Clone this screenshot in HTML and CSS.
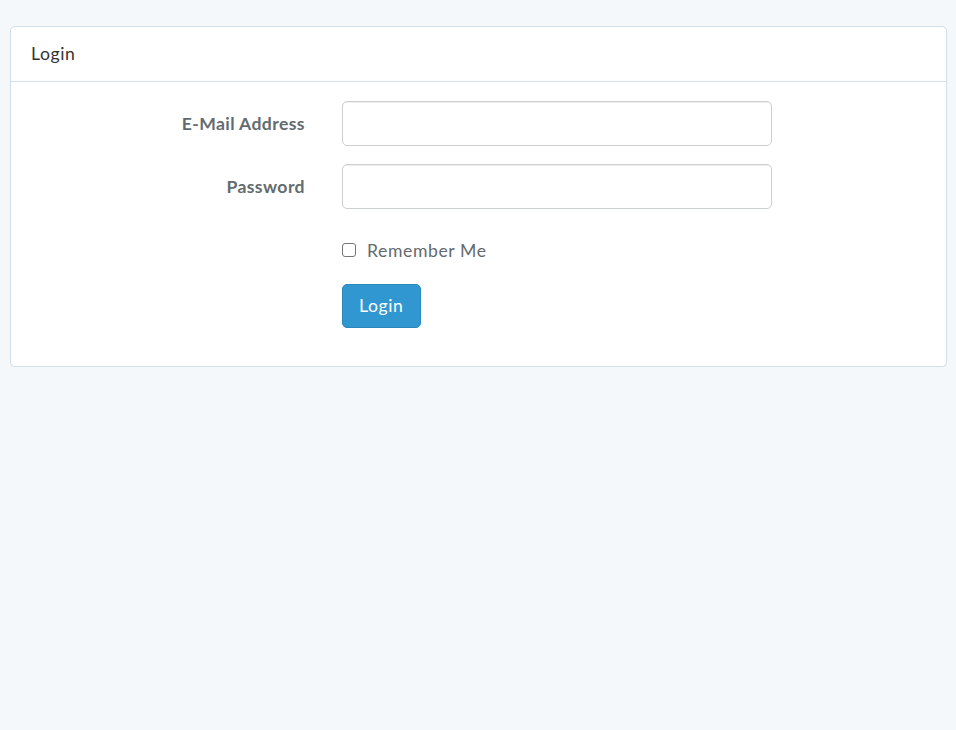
FILE: index.html
```html
<!DOCTYPE html>
<html lang="en">
<head>
<meta charset="utf-8">
<title>Login</title>
<link rel="stylesheet" href="styles.css">
</head>
<body>
<div class="panel">
  <div class="panel-heading">Login</div>
  <div class="panel-body">
    <form class="form">
      <div class="form-group field-group">
        <label class="control-label" for="email">E-Mail Address</label>
        <input class="form-control" id="email" type="email">
      </div>
      <div class="form-group field-group">
        <label class="control-label" for="password">Password</label>
        <input class="form-control" id="password" type="password">
      </div>
      <div class="form-group check-group">
        <label class="checkbox"><input type="checkbox" class="check"><span>Remember Me</span></label>
      </div>
      <div class="form-group">
        <button type="button" class="btn">Login</button>
      </div>
    </form>
  </div>
</div>
</body>
</html>
```

FILE: styles.css
```css
html, body {
  margin: 0;
  padding: 0;
}
body {
  background: #f5f8fa;
  font-family: "Lato", "Noto Sans", sans-serif;
  font-size: 17.6px;
  line-height: 28px;
  letter-spacing: 0.6px;
  color: #636b6f;
}
.panel {
  margin: 26px 9px 0 10px;
  background: #fff;
  border: 1px solid #d3e0e9;
  border-radius: 5px;
  box-shadow: 0 1px 1px rgba(0,0,0,0.05);
}
.panel-heading {
  padding: 13px 20px 13px;
  color: #333;
  border-bottom: 1px solid #d3e0e9;
}
.panel-body {
  padding: 19px 0;
}
.form-group {
  display: grid;
  grid-template-columns: 294px 430px;
  column-gap: 37px;
  align-items: center;
  margin-bottom: 19px;
}
.field-group {
  margin-bottom: 18px;
}
.control-label {
  text-align: right;
  font-weight: 700;
  letter-spacing: 0.4px;
}
.form-group > .btn,
.check-group > .checkbox {
  grid-column: 2;
  justify-self: start;
}
.form-control {
  box-sizing: border-box;
  height: 45px;
  width: 100%;
  margin: 0;
  padding: 7px 14px;
  border: 1px solid #ccd0d2;
  border-radius: 5px;
  background: #fff;
  box-shadow: inset 0 1px 1px rgba(0,0,0,0.075);
  font: inherit;
  color: #555;
}
.check-group {
  padding: 10px 0 0;
  height: 28px;
}
.checkbox {
  display: flex;
  align-items: center;
  gap: 11px;
  font-weight: 400;
}
.check {
  appearance: none;
  -webkit-appearance: none;
  box-sizing: border-box;
  width: 14px;
  height: 14px;
  margin: 0 0 3px;
  border: 1px solid #767676;
  border-radius: 3px;
  background: #fff;
}
.btn {
  box-sizing: border-box;
  height: 44px;
  padding: 0 16px;
  border: 1px solid #2a88bd;
  border-radius: 5px;
  background: #3097d1;
  color: #fff;
  font: inherit;
  line-height: 28px;
  letter-spacing: 0.6px;
}
```
